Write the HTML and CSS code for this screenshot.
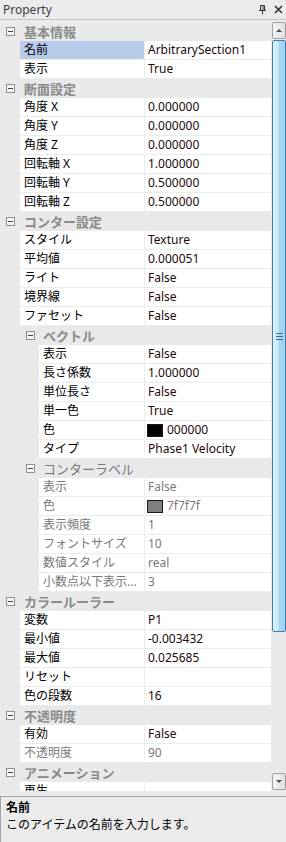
FILE: index.html
```html
<!DOCTYPE html>
<html lang="ja">

<head>
    <meta charset="UTF-8">
    <title>Property</title>
    <link rel="stylesheet" href="styles.css">
</head>

<body>
    <div class="panel">
        <div class="titlebar">
            <span class="title">Property</span>
            <span class="tools">
                <svg width="9" height="10" viewBox="0 0 9 10"><path d="M2.5 0.5h4v5h-4z M1 5.5h7 M4.5 5.5v4 M5 1v4.5" fill="none" stroke="#333" stroke-width="1"/></svg>
                <svg width="9" height="9" viewBox="0 0 9 9"><path d="M1 1l7 7M8 1l-7 7" stroke="#333" stroke-width="1.6"/></svg>
            </span>
        </div>

        <div class="grid-wrap">
            <div class="grid">
                <div class="cat"><span class="exp"></span>基本情報</div>
                <div class="row sel"><div class="name">名前</div><div class="val">ArbitrarySection1</div></div>
                <div class="row"><div class="name">表示</div><div class="val">True</div></div>

                <div class="cat"><span class="exp"></span>断面設定</div>
                <div class="row"><div class="name">角度 X</div><div class="val">0.000000</div></div>
                <div class="row"><div class="name">角度 Y</div><div class="val">0.000000</div></div>
                <div class="row"><div class="name">角度 Z</div><div class="val">0.000000</div></div>
                <div class="row"><div class="name">回転軸 X</div><div class="val">1.000000</div></div>
                <div class="row"><div class="name">回転軸 Y</div><div class="val">0.500000</div></div>
                <div class="row"><div class="name">回転軸 Z</div><div class="val">0.500000</div></div>

                <div class="cat"><span class="exp"></span>コンター設定</div>
                <div class="row"><div class="name">スタイル</div><div class="val">Texture</div></div>
                <div class="row"><div class="name">平均値</div><div class="val">0.000051</div></div>
                <div class="row"><div class="name">ライト</div><div class="val">False</div></div>
                <div class="row"><div class="name">境界線</div><div class="val">False</div></div>
                <div class="row"><div class="name">ファセット</div><div class="val">False</div></div>

                <div class="cat sub"><span class="exp"></span>ベクトル</div>
                <div class="row sub"><div class="name">表示</div><div class="val">False</div></div>
                <div class="row sub"><div class="name">長さ係数</div><div class="val">1.000000</div></div>
                <div class="row sub"><div class="name">単位長さ</div><div class="val">False</div></div>
                <div class="row sub"><div class="name">単一色</div><div class="val">True</div></div>
                <div class="row sub"><div class="name">色</div><div class="val"><span class="swatch black"></span>000000</div></div>
                <div class="row sub"><div class="name">タイプ</div><div class="val">Phase1 Velocity</div></div>

                <div class="cat sub plain"><span class="exp"></span>コンターラベル</div>
                <div class="row sub off"><div class="name">表示</div><div class="val">False</div></div>
                <div class="row sub off"><div class="name">色</div><div class="val"><span class="swatch gray"></span>7f7f7f</div></div>
                <div class="row sub off"><div class="name">表示頻度</div><div class="val">1</div></div>
                <div class="row sub off"><div class="name">フォントサイズ</div><div class="val">10</div></div>
                <div class="row sub off"><div class="name">数値スタイル</div><div class="val">real</div></div>
                <div class="row sub off"><div class="name">小数点以下表示...</div><div class="val">3</div></div>

                <div class="cat"><span class="exp"></span>カラールーラー</div>
                <div class="row"><div class="name">変数</div><div class="val">P1</div></div>
                <div class="row"><div class="name">最小値</div><div class="val">-0.003432</div></div>
                <div class="row"><div class="name">最大値</div><div class="val">0.025685</div></div>
                <div class="row"><div class="name">リセット</div><div class="val"></div></div>
                <div class="row"><div class="name">色の段数</div><div class="val">16</div></div>

                <div class="cat"><span class="exp"></span>不透明度</div>
                <div class="row"><div class="name">有効</div><div class="val">False</div></div>
                <div class="row off"><div class="name">不透明度</div><div class="val">90</div></div>

                <div class="cat"><span class="exp"></span>アニメーション</div>
                <div class="row"><div class="name">再生</div><div class="val"></div></div>
            </div>

            <div class="vscroll">
                <div class="sbtn"><span class="arrow up"></span></div>
                <div class="track">
                    <div class="thumb"><span class="grip"></span></div>
                </div>
                <div class="sbtn"><span class="arrow down"></span></div>
            </div>
        </div>

        <div class="desc">
            <div class="desc-title">名前</div>
            <div class="desc-text">このアイテムの名前を入力します。</div>
        </div>
    </div>
</body>

</html>
```

FILE: styles.css
```css
body {
    margin: 0;
    padding: 0;
    background-color: #ebebeb;
    font-family: "Noto Sans", "Noto Sans CJK JP", sans-serif;
    font-size: 12px;
    color: #000;
}

.panel {
    width: 286px;
    height: 842px;
    display: flex;
    flex-direction: column;
    overflow: hidden;
}

.titlebar {
    height: 19px;
    border-bottom: 1px solid #c4c4c4;
    display: flex;
    align-items: center;
    justify-content: space-between;
    padding: 0 3px 0 3px;
    margin-bottom: 2px;
}

.title {
    color: #3c3c3c;
    line-height: 19px;
}

.tools {
    display: flex;
    align-items: center;
    gap: 7px;
}

.grid-wrap {
    height: 769px;
    display: flex;
    overflow: hidden;
}

.grid {
    width: 271px;
    background-color: #e9e9e9;
}

.cat {
    height: 19px;
    display: flex;
    align-items: center;
    padding-left: 6px;
    font-size: 13px;
    font-weight: bold;
    color: #8a8a8a;
    background-color: #e9e9e9;
}

.cat.sub {
    padding-left: 26px;
}

.cat.plain {
    font-weight: normal;
    color: #7a7a7a;
}

.exp {
    width: 7px;
    height: 7px;
    border: 1px solid #8f8f8f;
    background-color: #f6f6f6;
    margin-right: 9px;
    position: relative;
    flex-shrink: 0;
}

.cat.sub .exp {
    margin-right: 8px;
}

.exp::after {
    content: "";
    position: absolute;
    left: 1px;
    top: 3px;
    width: 5px;
    height: 1px;
    background-color: #444;
}

.row {
    height: 19px;
    display: flex;
    padding-left: 20px;
}

.row.sub {
    padding-left: 39px;
}

.name,
.val {
    background-color: #fff;
    border-bottom: 1px solid #ececec;
    line-height: 18px;
    white-space: nowrap;
    overflow: hidden;
}

.name {
    flex: 1;
    padding-left: 4px;
}

.val {
    width: 127px;
    box-sizing: border-box;
    border-left: 1px solid #ececec;
    padding-left: 3px;
    display: flex;
    align-items: center;
    color: #1c0a0a;
}

.sel .name {
    background-color: #b7cbea;
}

.off .name,
.off .val {
    color: #7a7a7a;
}

.swatch {
    width: 14px;
    height: 11px;
    border: 1px solid #1a1a1a;
    margin: 0 4px 0 -1px;
}

.swatch.black {
    background-color: #000;
}

.swatch.gray {
    background-color: #7f7f7f;
}

.vscroll {
    width: 14px;
    margin-left: 1px;
    display: flex;
    flex-direction: column;
    background-color: #e9e9e9;
}

.sbtn {
    height: 17px;
    margin-bottom: 1px;
    box-sizing: border-box;
    border: 1px solid #a0a0a0;
    border-radius: 2px;
    background: linear-gradient(90deg, #f4f4f4, #e0e0e0);
    display: flex;
    align-items: center;
    justify-content: center;
}

.sbtn:last-child {
    margin: 1px 0 1px 0;
}

.arrow {
    width: 0;
    height: 0;
    border-left: 3px solid transparent;
    border-right: 3px solid transparent;
}

.arrow.up {
    border-bottom: 3px solid #4d4d4d;
}

.arrow.down {
    border-top: 3px solid #4d4d4d;
}

.track {
    flex: 1;
}

.thumb {
    height: 592px;
    box-sizing: border-box;
    border: 1px solid #3d80b4;
    border-radius: 2px;
    background: linear-gradient(90deg, #e2f3fc 0%, #cbe9f8 40%, #a9d8f4 50%, #9fd3f2 100%);
    display: flex;
    align-items: center;
    justify-content: center;
}

.grip {
    width: 7px;
    height: 5px;
    border-top: 1px solid #3d6f99;
    border-bottom: 1px solid #3d6f99;
    position: relative;
}

.grip::after {
    content: "";
    position: absolute;
    left: 0;
    top: 2px;
    width: 7px;
    height: 1px;
    background-color: #3d6f99;
}

.desc {
    margin-top: 5px;
    flex: 1;
    border-top: 1px solid #a3a3a3;
    border-left: 1px solid #a3a3a3;
    padding: 2px 5px;
}

.desc-title {
    font-weight: bold;
    line-height: 17px;
}

.desc-text {
    line-height: 17px;
}
```
